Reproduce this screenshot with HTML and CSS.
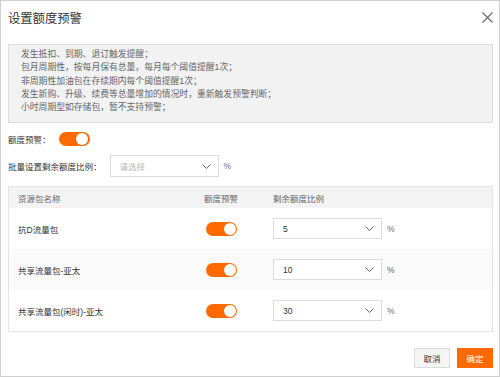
FILE: index.html
```html
<!DOCTYPE html>
<html lang="zh-CN">
<head>
<meta charset="UTF-8" />
<meta name="viewport" content="width=device-width, initial-scale=1.0"/>
<title>设置额度预警</title>
<link rel="stylesheet" href="styles.css">
</head>
<body>

<div class="dialog">
  <div class="dialog-head">
    <span class="dialog-title">设置额度预警</span>
    <svg class="close" width="11" height="11" viewBox="0 0 11 11">
      <path d="M0.5 0.5 L10.5 10.5 M10.5 0.5 L0.5 10.5" stroke="#666" stroke-width="1.1" fill="none"/>
    </svg>
  </div>

  <div class="notice">
    <p>发生抵扣、到期、退订触发提醒；</p>
    <p>包月周期性，按每月保有总量，每月每个阈值提醒1次；</p>
    <p>非周期性加油包在存续期内每个阈值提醒1次；</p>
    <p>发生新购、升级、续费等总量增加的情况时，重新触发预警判断；</p>
    <p>小时周期型如存储包，暂不支持预警；</p>
  </div>

  <div class="form-row">
    <span class="label">额度预警：</span>
    <span class="switch"></span>
  </div>

  <div class="form-row batch">
    <span class="label">批量设置剩余额度比例：</span>
    <div class="select wide placeholder">
      <span>请选择</span>
      <svg class="arrow" width="9" height="5" viewBox="0 0 9 5"><path d="M0.5 0.5 L4.5 4.5 L8.5 0.5" stroke="#666" fill="none"/></svg>
    </div>
    <span class="unit">%</span>
  </div>

  <div class="table">
    <div class="tr th">
      <div class="td">资源包名称</div>
      <div class="td">额度预警</div>
      <div class="td">剩余额度比例</div>
    </div>
    <div class="tr">
      <div class="td">抗D流量包</div>
      <div class="td"><span class="switch"></span></div>
      <div class="td">
        <div class="select"><span>5</span><svg class="arrow" width="9" height="5" viewBox="0 0 9 5"><path d="M0.5 0.5 L4.5 4.5 L8.5 0.5" stroke="#666" fill="none"/></svg></div>
        <span class="unit">%</span>
      </div>
    </div>
    <div class="tr">
      <div class="td">共享流量包-亚太</div>
      <div class="td"><span class="switch"></span></div>
      <div class="td">
        <div class="select"><span>10</span><svg class="arrow" width="9" height="5" viewBox="0 0 9 5"><path d="M0.5 0.5 L4.5 4.5 L8.5 0.5" stroke="#666" fill="none"/></svg></div>
        <span class="unit">%</span>
      </div>
    </div>
    <div class="tr">
      <div class="td">共享流量包(闲时)-亚太</div>
      <div class="td"><span class="switch"></span></div>
      <div class="td">
        <div class="select"><span>30</span><svg class="arrow" width="9" height="5" viewBox="0 0 9 5"><path d="M0.5 0.5 L4.5 4.5 L8.5 0.5" stroke="#666" fill="none"/></svg></div>
        <span class="unit">%</span>
      </div>
    </div>
  </div>

  <div class="dialog-foot">
    <button class="btn">取消</button>
    <button class="btn primary">确定</button>
  </div>
</div>

</body>
</html>
```

FILE: styles.css
```css
body {
  margin: 0;
  font-family: "Liberation Sans", "Noto Sans CJK SC", sans-serif;
  font-size: 8.5px;
  color: #333;
  background: #fff;
}
.dialog {
  box-sizing: border-box;
  width: 500px;
  height: 377px;
  border: 1px solid #cfcfcf;
  padding: 0 6px 0 7px;
  display: flex;
  flex-direction: column;
}
.dialog-head {
  height: 33px;
  display: flex;
  align-items: center;
  justify-content: space-between;
  margin-bottom: 10px;
}
.dialog-title {
  font-size: 12.3px;
  color: #333;
}
.notice {
  background: #f2f2f2;
  border: 1px solid #dcdcdc;
  padding: 3px 12px 8px;
  color: #666;
  font-size: 8.8px;
}
.notice p {
  margin: 0;
  line-height: 13.3px;
}
.form-row {
  display: flex;
  align-items: center;
  margin-top: 9px;
  height: 14px;
}
.form-row.batch {
  height: 22px;
}
.label {
  color: #333;
  margin-right: 8px;
}
.switch {
  display: inline-block;
  position: relative;
  width: 31px;
  height: 14px;
  border-radius: 7px;
  background: #ff6a00;
}
.switch::after {
  content: "";
  position: absolute;
  right: 1.5px;
  top: 1px;
  width: 12px;
  height: 12px;
  border-radius: 50%;
  background: #fff;
}
.select {
  box-sizing: border-box;
  width: 109px;
  height: 21px;
  border: 1px solid #dcdcdc;
  background: #fff;
  display: flex;
  align-items: center;
  justify-content: space-between;
  padding: 0 7px 0 9px;
  color: #333;
}
.select.wide {
  height: 22px;
}
.select.placeholder span {
  color: #b5b5b5;
}
.unit {
  margin-left: 5px;
  color: #666;
}
.table {
  margin-top: 9px;
  border: 1px solid #e3e3e3;
}
.tr {
  display: grid;
  grid-template-columns: 186px 69px 1fr;
  height: 41px;
  align-items: center;
}
.tr:nth-child(3) {
  background: #fafafa;
}
.tr.th {
  height: 21px;
  background: #f3f3f3;
  color: #666;
}
.td {
  padding-left: 9px;
  display: flex;
  align-items: center;
}
.tr .td:nth-child(2) {
  padding-left: 11px;
}
.tr.th .td:nth-child(2) {
  padding-left: 9px;
}
.dialog-foot {
  margin-top: 16px;
  display: flex;
  justify-content: flex-end;
  gap: 7px;
}
.btn {
  width: 36px;
  height: 20px;
  padding: 0;
  font-family: inherit;
  font-size: 8.5px;
  border: 1px solid #dcdcdc;
  background: #f5f5f5;
  color: #333;
}
.btn.primary {
  background: #ff6a00;
  border-color: #ff6a00;
  color: #fff;
}
```
